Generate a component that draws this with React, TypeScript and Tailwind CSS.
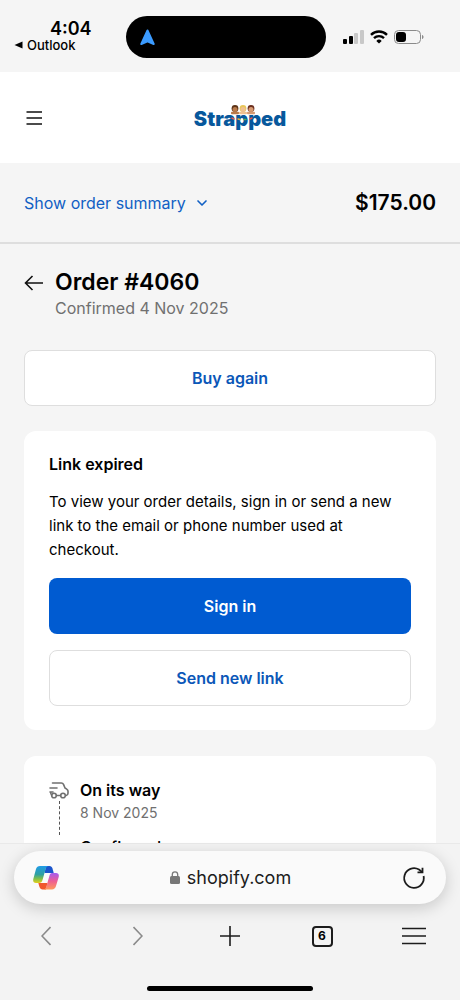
import type { ReactNode } from "react";
import { ChevronDown } from "lucide-react";

const FONT = "font-['Inter','Liberation_Sans',sans-serif]";

function StatusBar() {
  return (
    <div className="grid h-[72px] shrink-0 grid-cols-[126px_1fr_134px] items-center">
      <div className="flex flex-col pb-[2px] pl-[14px]">
        <span className="pl-9 text-lg leading-5 font-semibold">4:04</span>
        <a href="#outlook" className="flex items-center gap-1 text-[13px] leading-3 font-medium">
          <svg width="9" height="8" viewBox="0 0 9 8" aria-hidden="true">
            <path d="M8.5 .5v7L.5 4z" fill="#000" />
          </svg>
          Outlook
        </a>
      </div>
      <div className="mt-[2px] flex h-[42px] items-center rounded-full bg-black pl-[14px]">
        <svg width="15" height="17" viewBox="0 0 15 17" aria-hidden="true">
          <path
            d="M7.5 1.5 13.7 15 7.5 12.3 1.3 15z"
            fill="#3b9bff"
            stroke="#3b9bff"
            strokeWidth="2"
            strokeLinejoin="round"
          />
        </svg>
      </div>
      <div className="flex items-center gap-[6px] pt-[2px] pl-[17px]">
        <svg width="21" height="14" viewBox="0 0 21 14" aria-hidden="true">
          <rect x="0" y="9" width="4" height="5" rx="1" />
          <rect x="6" y="6" width="4" height="8" rx="1" />
          <rect x="11" y="3" width="4" height="11" rx="1" fill="#c8c8c8" />
          <rect x="17" y="0" width="4" height="14" rx="1" fill="#c8c8c8" />
        </svg>
        <svg width="18" height="14" viewBox="0 0 18 14" fill="none" stroke="#000" strokeWidth="2.4" aria-hidden="true">
          <path d="M1 4.8a11.4 11.4 0 0 1 16 0" />
          <path d="M4 8.1a7.2 7.2 0 0 1 10 0" />
          <path d="M9 13.6 6.3 10.9a3.9 3.9 0 0 1 5.4 0z" fill="#000" stroke="none" />
        </svg>
        <svg width="30" height="14" viewBox="0 0 30 14" aria-hidden="true">
          <rect x=".5" y=".5" width="26" height="13" rx="4" fill="none" stroke="#8a8a8a" />
          <rect x="2" y="2" width="10" height="10" rx="3" />
          <path d="M28 5v4c1-.3 1.5-1 1.5-2S29 5.3 28 5z" fill="#8a8a8a" />
        </svg>
      </div>
    </div>
  );
}

/** Three little cartoon heads leaning over the wordmark. */
function LogoFaces() {
  const heads = [
    { x: 5, skin: "#b97a4b", hair: "#5c3317" },
    { x: 13, skin: "#f0c090", hair: "#e8c65a" },
    { x: 21, skin: "#d79a72", hair: "#6b2f1f" },
  ];
  return (
    <svg width="26" height="18" viewBox="0 0 26 18" className="absolute top-0 left-[56px]" aria-hidden="true">
      {heads.map(({ x, skin, hair }) => (
        <g key={x}>
          <circle cx={x} cy="3.500" r="3.400" fill={hair} />
          <circle cx={x} cy="4.500" r="2.500" fill={skin} />
          <rect x={x - 4} y="6.800" width="8" height="2.400" rx="1" fill={skin} />
        </g>
      ))}
      <g strokeWidth="1.5" strokeLinecap="round">
        <path d="M2 13l2 1" stroke="#e2574c" />
        <path d="M8 14l2 .5" stroke="#f0b43c" />
        <path d="M14 14.500h2" stroke="#4fae5a" />
        <path d="M20 14l2-1" stroke="#e2574c" />
      </g>
    </svg>
  );
}

function Button({ children, primary = false }: { children: ReactNode; primary?: boolean }) {
  return (
    <button
      type="button"
      className={
        primary
          ? "h-14 w-full rounded-lg bg-[#005bd1] text-base font-semibold text-white"
          : "h-14 w-full rounded-lg border border-[#dedede] bg-white text-base font-semibold text-[#0b57b8]"
      }
    >
      {children}
    </button>
  );
}

function TruckIcon() {
  return (
    <svg
      width="20"
      height="17"
      viewBox="0 0 20 17"
      fill="none"
      stroke="#707070"
      strokeWidth="1.6"
      strokeLinecap="round"
      strokeLinejoin="round"
      aria-hidden="true"
    >
      <path d="M3.500 1h8.800c1 0 1.800.5 2.200 1.400L16 6l1.800 1.200c.8.500 1.200 1 1.200 1.900v2.200c0 1.200-.7 2-1.800 2.200" />
      <path d="M1 6h7M1 10h3M1.500 10c.2 1.500.6 2.500 1.200 3.200M7.500 13.500h4" />
      <circle cx="5" cy="13.500" r="2.300" />
      <circle cx="14" cy="13.500" r="2.300" />
    </svg>
  );
}

function CopilotIcon() {
  return (
    <svg width="26" height="24" viewBox="0 0 26 24" aria-hidden="true">
      <defs>
        <linearGradient id="cool" x1="0" y1="0" x2="0" y2="1">
          <stop offset="0" stopColor="#1f9be8" />
          <stop offset=".5" stopColor="#2fa0a0" />
          <stop offset=".75" stopColor="#7fbf4a" />
          <stop offset="1" stopColor="#e6cf1c" />
        </linearGradient>
        <linearGradient id="warm" x1="0" y1="0" x2="0" y2="1">
          <stop offset="0" stopColor="#a45cf0" />
          <stop offset=".5" stopColor="#ee5f93" />
          <stop offset="1" stopColor="#ff9a5a" />
        </linearGradient>
      </defs>
      <path d="M13 0h3.500c1.500 0 2.500 1 3 2.500l1.200 4.500H11.500z" fill="#1b55cc" />
      <path d="M13 23.500H9.500c-1.500 0-2.500-1-3-2.500L5.300 17H14.500z" fill="#f0582d" />
      <path d="M7 0h9c-2 0-3 1.500-3.500 3.500l-3 10.500c-.5 2-1.500 3-3.500 3H3C.8 17-.3 15.400.3 13L3 3C3.600 1 5 0 7 0z" fill="url(#cool)" />
      <path d="M19 23.500h-9c2 0 3-1.500 3.500-3.500l3-10.500c.5-2 1.500-2.500 3.500-2.500h3c2.200 0 3.300 1.500 2.700 4L23 20c-.6 2.300-2 3.500-4 3.500z" fill="url(#warm)" />
    </svg>
  );
}

function BrowserBar() {
  return (
    <footer className="relative z-10 flex shrink-0 flex-col border-t border-[#e9e9e9] bg-[#f3f3f3] pt-[7px]">
      <div className="mx-[14px] flex h-[53px] items-center justify-between rounded-full bg-[#fafafa] pr-5 pl-[19px] shadow-[0_4px_16px_rgba(0,0,0,0.18)]">
        <button type="button" aria-label="Copilot">
          <CopilotIcon />
        </button>
        <button type="button" className="flex items-center gap-[7px] text-lg leading-6 text-[#1c1c1c]">
          <svg width="10" height="13" viewBox="0 0 10 13" aria-hidden="true">
            <rect x="0" y="5" width="10" height="8" rx="1.5" fill="#777" />
            <path d="M2.300 6V3.500a2.700 2.700 0 0 1 5.400 0V6" fill="none" stroke="#777" strokeWidth="1.3" />
          </svg>
          shopify.com
        </button>
        <button type="button" aria-label="Reload">
          <svg width="24" height="24" viewBox="0 0 24 24" fill="none" stroke="#1c1c1c" strokeWidth="1.8" aria-hidden="true">
            <path d="M21.600 10A9.800 9.800 0 1 1 17 3.600L20.500 6.400" />
            <path d="M20.500 1.800V6.400H15.500" />
          </svg>
        </button>
      </div>
      <div className="grid h-[64px] grid-cols-5 items-center">
        <button type="button" aria-label="Back" className="flex justify-center">
          <svg width="10" height="20" viewBox="0 0 10 20" fill="none" stroke="#8a8a8a" strokeWidth="1.6" aria-hidden="true">
            <path d="M9.500 1 1 10l8.500 9" />
          </svg>
        </button>
        <button type="button" aria-label="Forward" className="flex justify-center">
          <svg width="10" height="20" viewBox="0 0 10 20" fill="none" stroke="#8a8a8a" strokeWidth="1.6" aria-hidden="true">
            <path d="M.5 1 9 10 .5 19" />
          </svg>
        </button>
        <button type="button" aria-label="New tab" className="flex justify-center">
          <svg width="20" height="20" viewBox="0 0 20 20" stroke="#1c1c1c" strokeWidth="1.6" aria-hidden="true">
            <path d="M10 0v20M0 10h20" />
          </svg>
        </button>
        <button type="button" aria-label="Tabs" className="flex justify-center">
          <span className="flex size-[21px] items-center justify-center rounded border-2 border-[#1c1c1c] text-xs leading-none font-bold">
            6
          </span>
        </button>
        <button type="button" aria-label="Menu" className="flex justify-center">
          <svg width="24" height="18" viewBox="0 0 24 18" stroke="#1c1c1c" strokeWidth="1.6" aria-hidden="true">
            <path d="M0 1.500h24M0 9h24M0 16.500h24" />
          </svg>
        </button>
      </div>
      <div className="mx-auto mt-[18px] mb-[9px] h-[5px] w-[36%] rounded-full bg-black" />
    </footer>
  );
}

export default function App() {
  return (
    <div className={`${FONT} flex h-screen flex-col overflow-hidden bg-[#f5f5f5] text-black`}>
      <StatusBar />
      <header className="grid h-[91px] shrink-0 grid-cols-[1fr_auto_1fr] items-center bg-white px-6">
        <button type="button" aria-label="Open menu" className="w-5">
          <svg width="20" height="14" viewBox="0 0 20 14" stroke="#111" strokeWidth="1.6" aria-hidden="true">
            <path d="M2.500 1h15.500M2.500 7h15.500M2.500 13h15.500" />
          </svg>
        </button>
        <a href="#home" className="relative pt-[2px] pl-5 text-xl leading-6 font-black text-[#07589c]">
          Strapped
          <LogoFaces />
        </a>
      </header>

      <main className="flex min-h-0 flex-1 flex-col overflow-hidden">
        <div className="flex h-[81px] shrink-0 items-center justify-between border-b-2 border-[#dedede] px-6">
          <button type="button" className="flex items-center gap-2 text-base text-[#1160c4]">
            Show order summary
            <ChevronDown size={16} strokeWidth={2.5} />
          </button>
          <span className="text-[21px] font-semibold">$175.00</span>
        </div>

        <div className="flex flex-col px-6 pt-6">
          <div className="flex gap-[11px]">
            <a href="#orders" aria-label="Back to orders" className="pt-[7px]">
              <svg width="20" height="16" viewBox="0 0 20 16" fill="none" stroke="#111" strokeWidth="1.6" aria-hidden="true">
                <path d="M19 8H2M8.500 1 1.500 8l7 7" />
              </svg>
            </a>
            <div>
              <h1 className="text-[23px] leading-7 font-semibold">Order #4060</h1>
              <p className="text-base text-[#707070]">Confirmed 4 Nov 2025</p>
            </div>
          </div>

          <div className="mt-[30px]">
            <Button>Buy again</Button>
          </div>

          <section className="mt-[25px] rounded-xl bg-white p-[25px] pt-[21px] pb-6">
            <h2 className="text-base font-semibold">Link expired</h2>
            <p className="mt-[14px] mb-4 text-[15px] leading-6">
              To view your order details, sign in or send a new link to the email or phone number used at checkout.
            </p>
            <div className="flex flex-col gap-4">
              <Button primary>Sign in</Button>
              <Button>Send new link</Button>
            </div>
          </section>

          <section className="mt-[26px] rounded-xl bg-white p-[25px] pt-[22px]">
            <ol>
              <li className="flex gap-[11px]">
                <div className="flex flex-col items-center pt-1">
                  <TruckIcon />
                  <div className="mt-[2px] flex-1 border-l border-dashed border-[#555]" />
                </div>
                <div className="pb-3">
                  <h3 className="text-base font-semibold">On its way</h3>
                  <p className="text-sm leading-[21px] text-[#707070]">8 Nov 2025</p>
                </div>
              </li>
              <li className="pl-[31px] text-base font-medium">Confirmed</li>
            </ol>
          </section>
        </div>
      </main>
      <BrowserBar />
    </div>
  );
}
